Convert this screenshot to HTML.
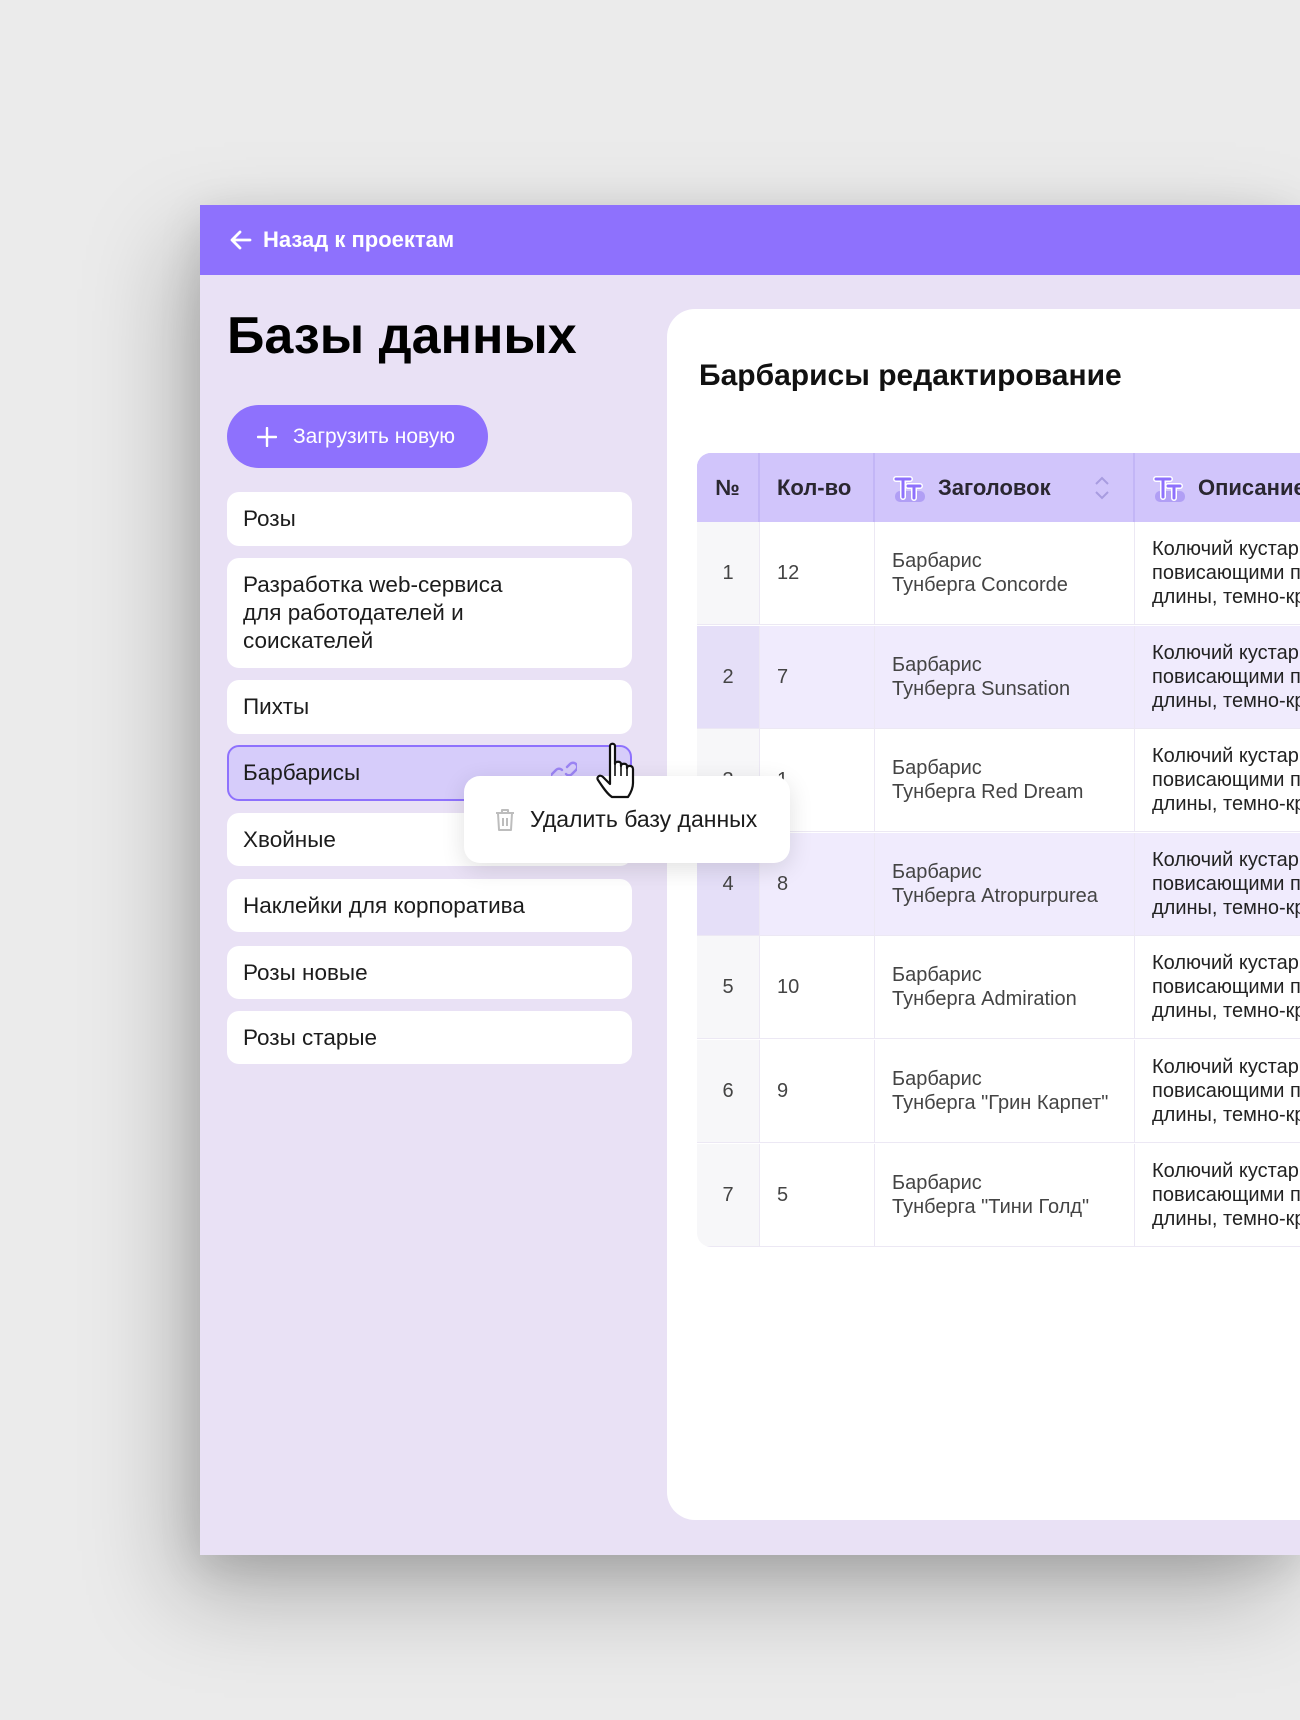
<!DOCTYPE html>
<html><head><meta charset="utf-8"><style>
*{box-sizing:border-box;margin:0;padding:0}
html,body{width:1300px;height:1720px;overflow:hidden}
body{background:#ebebeb;font-family:"Liberation Sans","DejaVu Sans",sans-serif;position:relative}
.frame{position:absolute;left:200px;top:205px;width:1100px;height:1350px;background:#e9e1f5;overflow:hidden;box-shadow:-20px 40px 90px rgba(0,0,0,.25),0 10px 40px rgba(0,0,0,.12)}
.top{position:absolute;left:0;top:0;right:0;height:70px;background:#8e71fd;color:#fff;font-size:22px;font-weight:bold}
.top span{position:absolute;left:63px;top:22px}
.top svg{position:absolute;left:30px;top:25px}
h1{position:absolute;left:27px;top:101px;font-size:52px;font-weight:bold;color:#000}
.btn{position:absolute;left:27px;top:200px;width:261px;height:63px;border-radius:32px;background:#8e71fd;color:#fff;font-size:21px}
.btn span{position:absolute;left:66px;top:20px}
.btn svg{position:absolute;left:30px;top:22px}
.item{position:absolute;left:27px;width:405px;background:#fff;border-radius:12px;font-size:22.5px;color:#1c1c1c;padding:0 16px;display:flex;align-items:center;line-height:28px}
.sel{background:#d6ccfa;border:2px solid #8e71fd;padding:0 14px}
.card{position:absolute;left:467px;top:104px;width:700px;height:1211px;background:#fff;border-radius:28px 0 0 28px;overflow:hidden}
.card h2{position:absolute;left:32px;top:50px;font-size:30px;font-weight:bold;color:#111}
.tbl{position:absolute;left:30px;top:144px;width:800px;height:794px;border-radius:14px;overflow:hidden;background:#fff}
.hd{position:absolute;top:0;height:69px;background:#d1c5fb;font-size:22px;font-weight:bold;color:#2a2730;display:flex;align-items:center}
.cell{position:absolute;font-size:20px;color:#444;line-height:24px;display:flex;align-items:center}
.popup{position:absolute;left:464px;top:776px;width:326px;height:87px;background:#fff;border-radius:16px;box-shadow:0 6px 24px rgba(0,0,0,.12);font-size:23px;color:#1c1c1c}
</style></head><body>
<div class="frame">
 <div class="top"><svg width="22" height="20" viewBox="0 0 22 20"><path d="M20 10H3M10 2L2 10l8 8" stroke="#fff" stroke-width="2.8" fill="none" stroke-linecap="round" stroke-linejoin="round"/></svg><span>Назад к проектам</span></div>
 <h1>Базы данных</h1>
 <div class="btn"><svg width="20" height="20"><path d="M10 1v18M1 10h18" stroke="#fff" stroke-width="2.4" stroke-linecap="round"/></svg><span>Загрузить новую</span></div>
 <div class="item" style="top:287px;height:54px">Розы</div>
 <div class="item" style="top:353px;height:110px">Разработка web-сервиса<br>для работодателей и<br>соискателей</div>
 <div class="item" style="top:475px;height:54px">Пихты</div>
 <div class="item sel" style="top:540px;height:56px">Барбарисы
   <svg style="position:absolute;left:322px;top:14px" width="26" height="22" viewBox="0 0 26 22"><path d="M10 16l-3 3a4 4 0 0 1-6-6l4-4a4 4 0 0 1 6 0M16 6l3-3a4 4 0 0 1 6 6l-4 4a4 4 0 0 1-6 0" stroke="#9b84f4" stroke-width="2.4" fill="none" stroke-linecap="round"/></svg></div>
 <div class="item" style="top:608px;height:53px">Хвойные</div>
 <div class="item" style="top:674px;height:53px">Наклейки для корпоратива</div>
 <div class="item" style="top:741px;height:53px">Розы новые</div>
 <div class="item" style="top:806px;height:53px">Розы старые</div>
 <div class="card">
  <h2>Барбарисы редактирование</h2>
  <div class="tbl">
   <div class="hd" style="left:0;width:800px"></div>
   <div class="hd" style="left:0;width:63px;justify-content:center;border-right:2px solid #c3b6f6">№</div>
   <div class="hd" style="left:63px;width:115px;padding-left:17px;border-right:2px solid #c3b6f6">Кол-во</div>
   <div class="hd" style="left:178px;width:260px;padding-left:63px;border-right:2px solid #c3b6f6">Заголовок
     <svg style="position:absolute;left:18px;top:22px" width="34" height="30" viewBox="0 0 34 30"><rect x="2" y="16" width="30" height="11" rx="5" fill="#b19ff5"/><path d="M3 4h14M10 4v18M15 11h12M21 11v12" stroke="#fff" stroke-width="6" stroke-linecap="round"/><path d="M3 4h14M10 4v18M15 11h12M21 11v12" stroke="#8e71fd" stroke-width="3" stroke-linecap="round"/></svg>
     <svg style="position:absolute;left:218px;top:22px" width="18" height="26"><path d="M3 9l6-6 6 6M3 17l6 6 6-6" stroke="#a89ce0" stroke-width="2" fill="none"/></svg></div>
   <div class="hd" style="left:438px;width:362px;padding-left:63px">Описание
     <svg style="position:absolute;left:18px;top:22px" width="34" height="30" viewBox="0 0 34 30"><rect x="2" y="16" width="30" height="11" rx="5" fill="#b19ff5"/><path d="M3 4h14M10 4v18M15 11h12M21 11v12" stroke="#fff" stroke-width="6" stroke-linecap="round"/><path d="M3 4h14M10 4v18M15 11h12M21 11v12" stroke="#8e71fd" stroke-width="3" stroke-linecap="round"/></svg></div>
   <div id="rows"></div>
  </div>
 </div>
</div>
<div class="popup"><svg style="position:absolute;left:30px;top:32px" width="22" height="24" viewBox="0 0 22 24"><path d="M2 5h18M8 5V2h6v3M4 5l1 17h12l1-17M9 10v8M13 10v8" stroke="#bdbdbd" stroke-width="2" fill="none" stroke-linejoin="round"/></svg><span style="position:absolute;left:66px;top:30px">Удалить базу данных</span></div>
<svg style="position:absolute;left:596px;top:742px" width="46" height="58" viewBox="0 0 46 58"><path d="M14 4c0-3 5-3 5 0v18c0-3 6-3 6 0v2c0-3 6-3 6 0v2c0-3 6-3 6 1v14c0 6-3 11-5 14H16C11 52 6 44 2 38c-2-3 2-6 5-3l7 7z" fill="#fff" stroke="#111" stroke-width="2.2" stroke-linejoin="round"/><path d="M19 22v12M25 24v10M31 26v8" stroke="#111" stroke-width="1.6"/></svg>
<script>
var d=[["1","12","Тунберга Concorde"],["2","7","Тунберга Sunsation"],["3","1","Тунберга Red Dream"],["4","8","Тунберга Atropurpurea"],["5","10","Тунберга Admiration"],["6","9","Тунберга \"Грин Карпет\""],["7","5","Тунберга \"Тини Голд\""]];
var h="";d.forEach(function(r,i){var t=69+i*103.6,alt=(i==1||i==3),bg=alt?"#f0ebfd":"#fff",nb=alt?"#e5dff8":"#f7f7f9";
h+='<div class="cell" style="left:0;top:'+t+'px;width:63px;height:103px;background:'+nb+';justify-content:center;border-right:1px solid #ece8f4;border-bottom:1px solid #ece8f4">'+r[0]+'</div>';
h+='<div class="cell" style="left:63px;top:'+t+'px;width:115px;height:103px;background:'+bg+';padding-left:17px;border-right:1px solid #ece8f4;border-bottom:1px solid #ece8f4">'+r[1]+'</div>';
h+='<div class="cell" style="left:178px;top:'+t+'px;width:260px;height:103px;background:'+bg+';padding-left:17px;border-right:1px solid #ece8f4;border-bottom:1px solid #ece8f4">Барбарис<br>'+r[2]+'</div>';
h+='<div class="cell" style="left:438px;top:'+t+'px;width:362px;height:103px;background:'+bg+';padding-left:17px;color:#222;white-space:nowrap;border-bottom:1px solid #ece8f4">Колючий кустарник с<br>повисающими побегами<br>длины, темно-красными</div>';});
document.getElementById("rows").innerHTML=h;
</script>
</body></html>
